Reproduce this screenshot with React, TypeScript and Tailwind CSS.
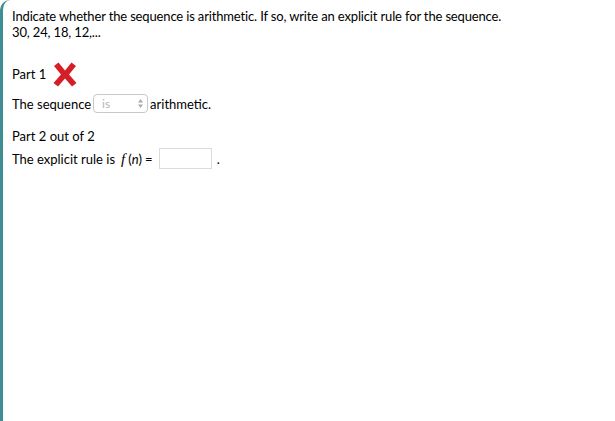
const App = () => {
  return (
    <div className="w-[615px] h-[421px] bg-white overflow-hidden">
      <div className="h-full border-l-[3px] border-[#3f8e93] rounded-tl-[10px] pl-[9px] pt-[8px] text-[13px] text-black font-['Lato','Open_Sans',sans-serif] leading-[16px]">
        <p className="tracking-[-0.15px]">Indicate whether the sequence is arithmetic. If so, write an explicit rule for the sequence.</p>
        <p className="tracking-[-0.15px]">30, 24, 18, 12,...</p>

        <div className="flex items-center gap-[7px] mt-[22px] h-[24px]">
          <span>Part 1</span>
          <svg width="24" height="25" viewBox="0 0 24 25">
            <path d="M1 4 L5.5 0.5 L12 8.5 L18.5 0.5 L23 4 L16 12.5 L23.5 21 L19 24.5 L12 16.5 L5 24.5 L0.5 21 L8 12.5 Z" fill="#d41f26" />
          </svg>
        </div>

        <div className="flex items-center mt-[8px] h-[19px]">
          <span>The sequence</span>
          <div className="ml-[2px] w-[55px] h-[19px] border border-[#c9c9c9] rounded-[4px] flex items-center justify-between pl-[8px] pr-[3px] text-[#b5b5b5] text-[12px]">
            <span>is</span>
            <svg width="7" height="11" viewBox="0 0 7 11">
              <path d="M3.5 1 L6 4.5 H1 Z" fill="#aaa" />
              <path d="M3.5 10 L6 6.5 H1 Z" fill="#aaa" />
            </svg>
          </div>
          <span className="ml-[2px]">arithmetic.</span>
        </div>

        <p className="mt-[15px]">Part 2 out of 2</p>
        <div className="flex items-center mt-[4px] h-[21px]">
          <span>The explicit rule is</span>
          <span className="ml-[6px] italic font-['Liberation_Serif',serif] text-[15px]">f</span>
          <span className="ml-[3px]">(<i>n</i>)</span>
          <span className="ml-[3px]">=</span>
          <div className="ml-[6px] w-[53px] h-[21px] border border-[#dcdcdc]"></div>
          <span className="ml-[5px]">.</span>
        </div>
      </div>
    </div>
  );
};

export default App;
